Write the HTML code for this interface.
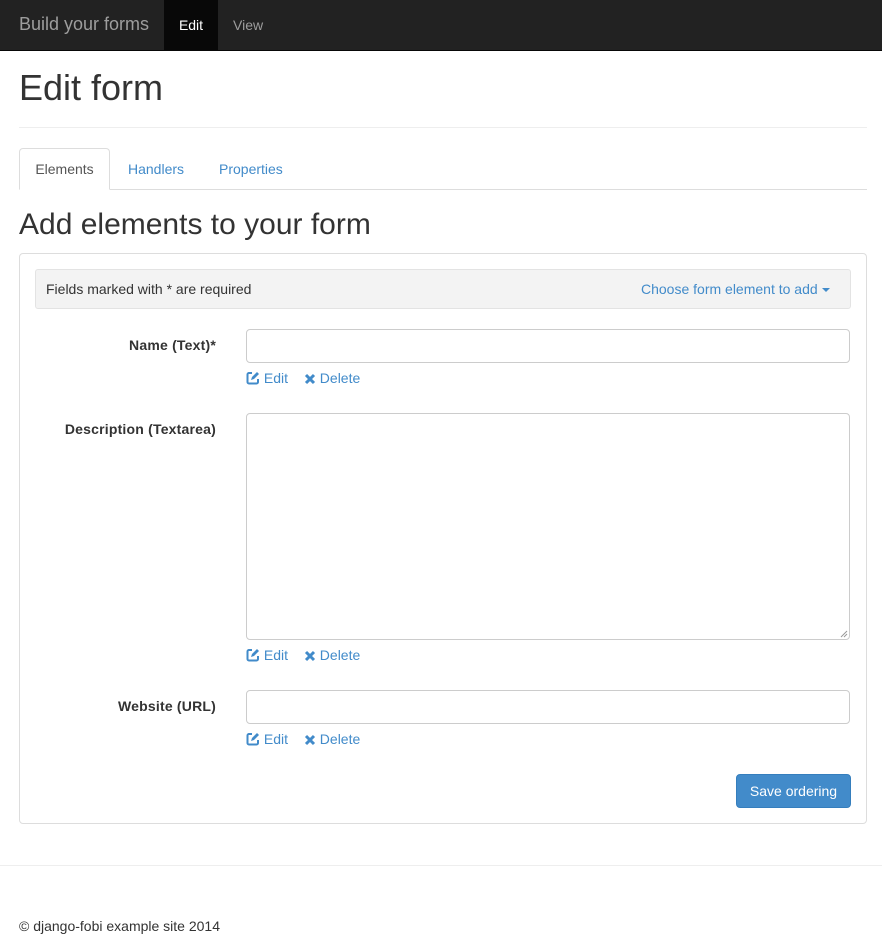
<!DOCTYPE html>
<html><head><meta charset="utf-8"><style>
*{box-sizing:border-box}
body{margin:0;font-family:"Liberation Sans",sans-serif;font-size:14px;color:#333;background:#fff;width:882px;height:949px;overflow:hidden;position:relative}
.nav{position:absolute;left:0;top:0;width:882px;height:51px;background:#222;border-bottom:1px solid #080808}
.nav .brand{position:absolute;left:19px;top:14px;font-size:18px;color:#9d9d9d}
.nav .edit{position:absolute;left:164px;top:0;width:54px;height:50px;background:#080808;color:#fff;line-height:50px;text-align:center}
.nav .view{position:absolute;left:233px;top:0;line-height:50px;color:#9d9d9d}
.abs{position:absolute}
h1{position:absolute;left:19px;top:66px;margin:0;font-size:36px;font-weight:500;line-height:44px}
.hr{position:absolute;height:1px;background:#eee}
.tabs{position:absolute;left:19px;top:189px;width:848px;height:1px;background:#ddd}
.tab{position:absolute;top:148px;height:42px;line-height:42px;color:#428bca}
.tab.active{left:19px;width:91px;border:1px solid #ddd;border-bottom-color:#fff;border-radius:4px 4px 0 0;background:#fff;color:#555;text-align:center;line-height:40px}
h2{position:absolute;left:19px;top:206px;margin:0;font-size:30px;font-weight:500;line-height:38px}
.panel{position:absolute;left:19px;top:253px;width:848px;height:571px;border:1px solid #ddd;border-radius:4px}
.well{position:absolute;left:35px;top:269px;width:816px;height:40px;background:#f3f3f3;border:1px solid #e3e3e3;border-radius:3px}
.lbl{position:absolute;font-weight:bold;text-align:right;right:666px;letter-spacing:0.2px}
.inp{position:absolute;left:246px;width:604px;border:1px solid #ccc;border-radius:4px;background:#fff}
.act{position:absolute;left:246px;color:#428bca;font-size:14px}
.act svg{vertical-align:-2px}
.btn{position:absolute;left:736px;top:774px;width:115px;height:34px;background:#428bca;border:1px solid #357ebd;border-radius:4px;color:#fff;text-align:center;line-height:32px}
</style></head><body>
<div class="nav"><span class="brand">Build your forms</span><span class="edit">Edit</span><span class="view">View</span></div>
<h1>Edit form</h1>
<div class="hr" style="left:19px;top:127px;width:848px"></div>
<div class="tabs"></div>
<div class="tab active">Elements</div>
<div class="tab" style="left:128px">Handlers</div>
<div class="tab" style="left:219px">Properties</div>
<h2>Add elements to your form</h2>
<div class="panel"></div>
<div class="well"><span class="abs" style="left:10px;top:11px">Fields marked with * are required</span><span class="abs" style="left:605px;top:11px;color:#428bca">Choose form element to add <span style="display:inline-block;width:0;height:0;border-left:4px solid transparent;border-right:4px solid transparent;border-top:4px solid #428bca;vertical-align:middle"></span></span></div>

<div class="lbl" style="top:337px">Name (Text)*</div>
<div class="inp" style="top:329px;height:34px"></div>
<div class="act" style="top:370px">
<svg width="14" height="14" viewBox="0 0 14 14"><path d="M6 2H3a1.5 1.5 0 0 0-1.5 1.5v7.5A1.5 1.5 0 0 0 3 12.5h7.5A1.5 1.5 0 0 0 12 11V8" fill="none" stroke="#428bca" stroke-width="2"/><path d="M5 9l1-3 5-5 2 2-5 5z" fill="#428bca"/></svg> Edit
<span style="margin-left:12px"><svg width="12" height="12" viewBox="0 0 12 12"><path d="M2 2l8 8M10 2l-8 8" stroke="#428bca" stroke-width="3"/></svg> Delete</span></div>

<div class="lbl" style="top:421px">Description (Textarea)</div>
<div class="inp" style="top:413px;height:227px"><svg class="abs" style="right:1px;bottom:1px" width="8" height="8"><path d="M1 7L7 1M4 7L7 4" stroke="#999" stroke-width="1"/></svg></div>
<div class="act" style="top:647px">
<svg width="14" height="14" viewBox="0 0 14 14"><path d="M6 2H3a1.5 1.5 0 0 0-1.5 1.5v7.5A1.5 1.5 0 0 0 3 12.5h7.5A1.5 1.5 0 0 0 12 11V8" fill="none" stroke="#428bca" stroke-width="2"/><path d="M5 9l1-3 5-5 2 2-5 5z" fill="#428bca"/></svg> Edit
<span style="margin-left:12px"><svg width="12" height="12" viewBox="0 0 12 12"><path d="M2 2l8 8M10 2l-8 8" stroke="#428bca" stroke-width="3"/></svg> Delete</span></div>

<div class="lbl" style="top:698px">Website (URL)</div>
<div class="inp" style="top:690px;height:34px"></div>
<div class="act" style="top:731px">
<svg width="14" height="14" viewBox="0 0 14 14"><path d="M6 2H3a1.5 1.5 0 0 0-1.5 1.5v7.5A1.5 1.5 0 0 0 3 12.5h7.5A1.5 1.5 0 0 0 12 11V8" fill="none" stroke="#428bca" stroke-width="2"/><path d="M5 9l1-3 5-5 2 2-5 5z" fill="#428bca"/></svg> Edit
<span style="margin-left:12px"><svg width="12" height="12" viewBox="0 0 12 12"><path d="M2 2l8 8M10 2l-8 8" stroke="#428bca" stroke-width="3"/></svg> Delete</span></div>

<div class="btn">Save ordering</div>
<div class="hr" style="left:0;top:865px;width:882px"></div>
<div class="abs" style="left:19px;top:918px">© django-fobi example site 2014</div>
</body></html>
